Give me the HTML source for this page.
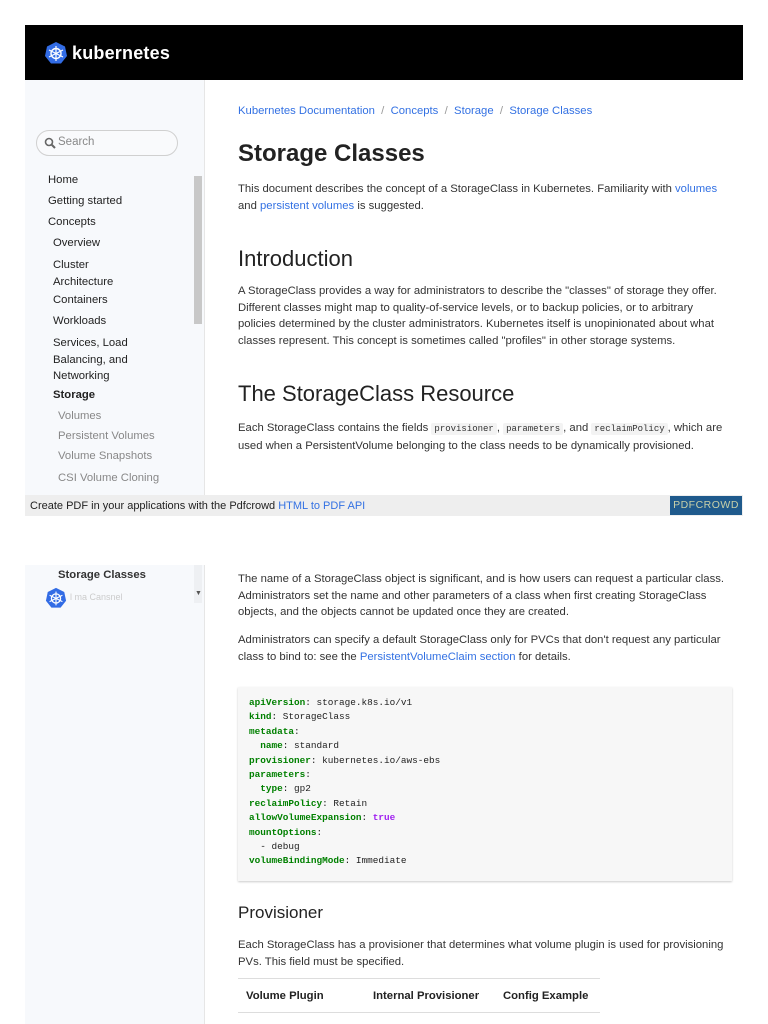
<!DOCTYPE html>
<html><head><meta charset="utf-8"><style>
*{margin:0;padding:0;box-sizing:border-box}
body{width:768px;height:1024px;background:#fff;position:relative;overflow:hidden;font-family:"Liberation Sans","DejaVu Sans",sans-serif;color:#303030}
.a{position:absolute;white-space:nowrap}
.hdr{left:25px;top:25px;width:718px;height:55px;background:#000}
.sb{background:#f7f9fc;border-right:1px solid #e6e6e6}
.p{font-size:11.3px;line-height:16.7px;color:#333;margin-top:2px}
a,.l{color:#3371e3;text-decoration:none}
.nav{font-size:11.3px;color:#222;margin-top:2px}
.sub{color:#888}
code{font-family:"Liberation Mono",monospace;font-size:9px;background:#f3f3f3;padding:1px 3px;border-radius:2px}
.code{left:238px;top:687px;width:494px;height:194px;background:#f7f7f7;box-shadow:0 1px 2px #ccc;font-family:"Liberation Mono",monospace;font-size:9.4px;line-height:14.4px;padding:9px 11px;color:#222;white-space:pre}
.k{color:#008000;font-weight:bold}
.t{color:#a020f0;font-weight:bold}
h1{font-size:24px;font-weight:bold;color:#222;margin-top:2px}
h2{font-size:22px;font-weight:normal;color:#222;margin-top:2px}
</style></head><body>
<div class="a hdr"></div>
<svg class="a" style="left:44px;top:41px" width="24" height="24" viewBox="0 0 24 24"><polygon points="12,1 21,5.5 23,15 17,22.5 7,22.5 1,15 3,5.5" fill="#326ce5"/><circle cx="12" cy="12.5" r="5" fill="none" stroke="#fff" stroke-width="1.4"/><g stroke="#fff" stroke-width="1.2"><line x1="12" y1="5" x2="12" y2="20"/><line x1="5" y1="9" x2="19" y2="16"/><line x1="19" y1="9" x2="5" y2="16"/></g></svg>
<div class="a" style="left:72px;top:43px;font-size:18px;font-weight:bold;color:#fff;letter-spacing:.2px">kubernetes</div>

<div class="a sb" style="left:25px;top:80px;width:180px;height:415px"></div>
<div class="a" style="left:36px;top:130px;width:142px;height:26px;border:1px solid #d0d0d0;border-radius:13px;background:#f9fafc"></div>
<svg class="a" style="left:44px;top:137px" width="12" height="12" viewBox="0 0 12 12"><circle cx="5" cy="5" r="3.5" fill="none" stroke="#666" stroke-width="1.6"/><line x1="7.5" y1="7.5" x2="11" y2="11" stroke="#666" stroke-width="2"/></svg>
<div class="a" style="left:58px;top:136px;font-size:11.5px;color:#888">Search</div>
<div class="a" style="left:194px;top:176px;width:8px;height:148px;background:#c8c8c8"></div>
<div class="a nav" style="left:48px;top:172px">Home</div>
<div class="a nav" style="left:48px;top:193px">Getting started</div>
<div class="a nav" style="left:48px;top:214px">Concepts</div>
<div class="a nav" style="left:53px;top:235px">Overview</div>
<div class="a nav" style="left:53px;top:255px;line-height:16.5px">Cluster<br>Architecture</div>
<div class="a nav" style="left:53px;top:292px">Containers</div>
<div class="a nav" style="left:53px;top:313px">Workloads</div>
<div class="a nav" style="left:53px;top:333px;line-height:16.5px">Services, Load<br>Balancing, and<br>Networking</div>
<div class="a nav" style="left:53px;top:387px;font-weight:bold">Storage</div>
<div class="a nav sub" style="left:58px;top:408px">Volumes</div>
<div class="a nav sub" style="left:58px;top:428px">Persistent Volumes</div>
<div class="a nav sub" style="left:58px;top:448px">Volume Snapshots</div>
<div class="a nav sub" style="left:58px;top:470px">CSI Volume Cloning</div>

<div class="a" style="left:238px;top:105px;font-size:11.3px"><span class="l">Kubernetes Documentation</span> <span style="color:#999">&nbsp;/&nbsp;</span> <span class="l">Concepts</span> <span style="color:#999">&nbsp;/&nbsp;</span> <span class="l">Storage</span> <span style="color:#999">&nbsp;/&nbsp;</span> <span class="l">Storage Classes</span></div>
<h1 class="a" style="left:238px;top:138px">Storage Classes</h1>
<div class="a p" style="left:238px;top:179px">This document describes the concept of a StorageClass in Kubernetes. Familiarity with <a>volumes</a><br>and <a>persistent volumes</a> is suggested.</div>
<h2 class="a" style="left:238px;top:244px">Introduction</h2>
<div class="a p" style="left:238px;top:281px">A StorageClass provides a way for administrators to describe the "classes" of storage they offer.<br>Different classes might map to quality-of-service levels, or to backup policies, or to arbitrary<br>policies determined by the cluster administrators. Kubernetes itself is unopinionated about what<br>classes represent. This concept is sometimes called "profiles" in other storage systems.</div>
<h2 class="a" style="left:238px;top:379px">The StorageClass Resource</h2>
<div class="a p" style="left:238px;top:418px">Each StorageClass contains the fields <code>provisioner</code>, <code>parameters</code>, and <code>reclaimPolicy</code>, which are<br>used when a PersistentVolume belonging to the class needs to be dynamically provisioned.</div>

<div class="a" style="left:25px;top:495px;width:718px;height:21px;background:#eee"></div>
<div class="a" style="left:30px;top:500px;font-size:11px;color:#222">Create PDF in your applications with the Pdfcrowd <span class="l">HTML to PDF API</span></div>
<div class="a" style="left:670px;top:496px;width:72px;height:19px;background:#1f5a8c;color:#c8d0a8;font-size:10.5px;text-align:center;line-height:19px;letter-spacing:.5px">PDFCROWD</div>

<div class="a sb" style="left:25px;top:565px;width:180px;height:459px"></div>
<div class="a" style="left:194px;top:565px;width:8px;height:38px;background:#eef0f3"></div>
<div class="a nav" style="left:58px;top:567px;font-weight:bold;color:#333">Storage Classes</div>
<svg class="a" style="left:45px;top:587px" width="22" height="22" viewBox="0 0 24 24"><polygon points="12,1 21,5.5 23,15 17,22.5 7,22.5 1,15 3,5.5" fill="#326ce5"/><circle cx="12" cy="12.5" r="5" fill="none" stroke="#fff" stroke-width="1.4"/><g stroke="#fff" stroke-width="1.2"><line x1="12" y1="5" x2="12" y2="20"/><line x1="5" y1="9" x2="19" y2="16"/><line x1="19" y1="9" x2="5" y2="16"/></g></svg>
<div class="a" style="left:70px;top:592px;font-size:9px;color:#ccc">l  ma  Cansnel</div>
<div class="a" style="left:195px;top:590px;font-size:7px;color:#555">&#9660;</div>

<div class="a p" style="left:238px;top:569px">The name of a StorageClass object is significant, and is how users can request a particular class.<br>Administrators set the name and other parameters of a class when first creating StorageClass<br>objects, and the objects cannot be updated once they are created.</div>
<div class="a p" style="left:238px;top:630px">Administrators can specify a default StorageClass only for PVCs that don't request any particular<br>class to bind to: see the <a>PersistentVolumeClaim section</a> for details.</div>
<div class="a code"><span class="k">apiVersion</span>: storage.k8s.io/v1
<span class="k">kind</span>: StorageClass
<span class="k">metadata</span>:
  <span class="k">name</span>: standard
<span class="k">provisioner</span>: kubernetes.io/aws-ebs
<span class="k">parameters</span>:
  <span class="k">type</span>: gp2
<span class="k">reclaimPolicy</span>: Retain
<span class="k">allowVolumeExpansion</span>: <span class="t">true</span>
<span class="k">mountOptions</span>:
  - debug
<span class="k">volumeBindingMode</span>: Immediate</div>
<div class="a" style="left:238px;top:903px;font-size:17px;color:#222">Provisioner</div>
<div class="a p" style="left:238px;top:935px">Each StorageClass has a provisioner that determines what volume plugin is used for provisioning<br>PVs. This field must be specified.</div>
<div class="a" style="left:238px;top:978px;width:362px;height:1px;background:#ddd"></div>
<div class="a" style="left:238px;top:1012px;width:362px;height:1px;background:#ddd"></div>
<div class="a" style="left:246px;top:990px;font-size:11.3px;font-weight:bold;color:#222">Volume Plugin</div>
<div class="a" style="left:373px;top:990px;font-size:11.3px;font-weight:bold;color:#222">Internal Provisioner</div>
<div class="a" style="left:503px;top:990px;font-size:11.3px;font-weight:bold;color:#222">Config Example</div>
</body></html>
